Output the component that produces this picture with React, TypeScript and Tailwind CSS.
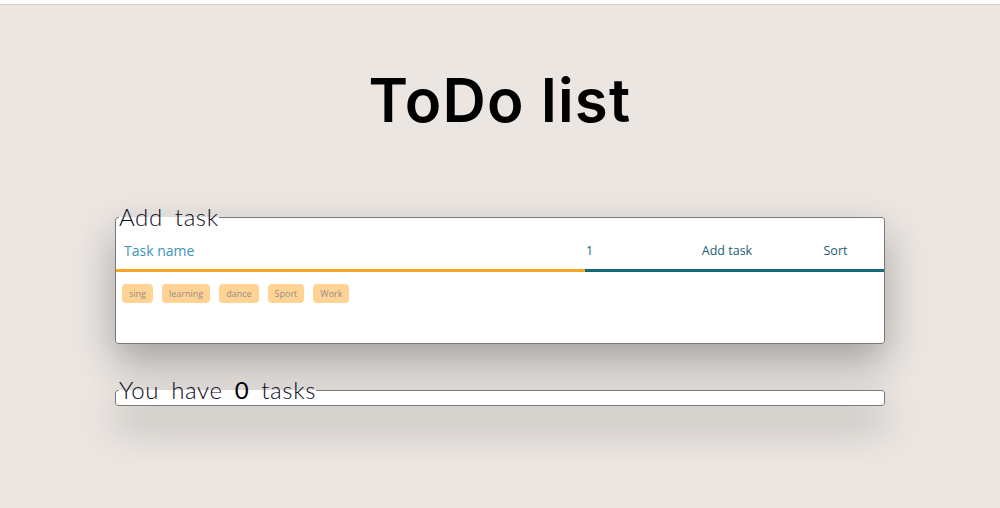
import React from 'react';

const tags = ['sing', 'learning', 'dance', 'Sport', 'Work'];

export default function App() {
    return (
        <div className="min-h-[508px] w-full bg-[#ebe6e2] font-['Lato',sans-serif]">
            {/* top strip */}
            <div className="h-[5px] bg-white border-b border-[#d6d2cf]" />

            {/* Title */}
            <h1 className="pt-[55px] text-center text-[60px] leading-[80px] font-semibold tracking-[1.2px] text-black font-['Inter',sans-serif]">
                ToDo list
            </h1>

            {/* Add task */}
            <fieldset className="mx-auto mt-[67px] w-[770px] rounded-[3px] border border-[#7a7a7a] bg-white p-0 shadow-[0_18px_40px_rgba(0,0,0,0.3)]">
                <legend className="ml-[3px] px-0 text-[24px] leading-[20px] font-light tracking-[0.6px] text-[#0c0c24] [word-spacing:5px]">
                    Add task
                </legend>
                <div className="mt-[10px] flex items-end">
                    <div className="flex h-[35px] w-[469px] items-center border-b-[3px] border-[#f8a523] pb-[5px] pl-[8px]">
                        <input
                            type="text"
                            placeholder="Task name"
                            className="w-full bg-transparent text-[14px] font-medium text-[#3d93b8] placeholder-[#3d93b8] outline-none font-['Open_Sans',sans-serif]"
                        />
                    </div>
                    <div className="flex h-[35px] flex-1 items-center border-b-[3px] border-[#146a77] pb-[3px] text-[12.5px] text-[#1b5e72] font-['Open_Sans',sans-serif]">
                        <span className="w-[82px] pl-[1px]">1</span>
                        <button className="w-[120px] text-center">Add task</button>
                        <button className="flex-1 text-center">Sort</button>
                    </div>
                </div>
                <div className="flex gap-[9px] pl-[6px] pt-[12px] pb-[40px]">
                    {tags.map(t => (
                        <span
                            key={t}
                            className="flex h-[19px] items-center rounded-[4px] bg-[#ffd394] px-[7px] text-[9px] text-[#948e88] font-['Open_Sans',sans-serif]"
                        >
                            {t}
                        </span>
                    ))}
                </div>
            </fieldset>

            {/* Tasks */}
            <fieldset className="mx-auto mt-[36px] h-[26px] w-[770px] rounded-[3px] border border-[#7a7a7a] bg-white p-0 shadow-[0_18px_40px_rgba(0,0,0,0.3)]">
                <legend className="ml-[3px] px-0 text-[24px] leading-[20px] font-light tracking-[0.6px] text-[#0c0c24] [word-spacing:5px]">
                    You have <span className="font-normal text-black">0</span> tasks
                </legend>
            </fieldset>
        </div>
    );
}
